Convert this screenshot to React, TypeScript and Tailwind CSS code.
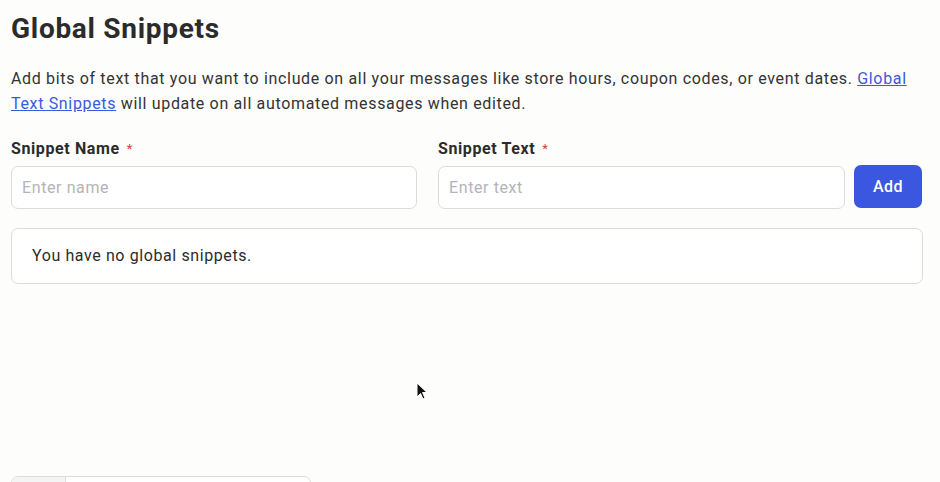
import React from "react";

const FONT = { fontFamily: "Roboto, 'Noto Sans', sans-serif" };

function Field({ label, placeholder, width }: { label: string; placeholder: string; width: string }) {
  return (
    <div className={`flex flex-col ${width}`}>
      <label className="mb-[7px] flex items-center text-[16px] font-bold leading-[20px] tracking-[0.6px] text-[#2b2b2b]">
        {label}
        <span className="ml-[7px] text-[13px] font-normal text-[#d0414a]">*</span>
      </label>
      <input
        placeholder={placeholder}
        className="h-[43px] rounded-[7px] border border-[#dcdcdc] bg-white px-[10px] text-[16px] tracking-[0.6px] text-[#2b2b2b] outline-none placeholder:text-[#b4b4b8]"
      />
    </div>
  );
}

export default function App() {
  return (
    <div
      className="relative h-[482px] w-[940px] overflow-hidden bg-[#fdfdfc] px-[11px] pt-[11px] text-[#2b2b2b]"
      style={FONT}
    >
      <h1 className="text-[28px] font-bold leading-[36px] tracking-[0.7px] text-[#2b2b2b]">Global Snippets</h1>
      <p className="mt-[19px] w-[905px] text-[16px] leading-[25px] tracking-[0.66px] text-[#333]">
        Add bits of text that you want to include on all your messages like store hours, coupon codes, or event dates.{" "}
        <a href="#" className="text-[#3a5bd9] underline">
          Global Text Snippets
        </a>{" "}
        will update on all automated messages when edited.
      </p>

      <div className="mt-[23px] flex items-end">
        <Field label="Snippet Name" placeholder="Enter name" width="w-[406px]" />
        <div className="ml-[21px] flex items-end gap-[9px]">
          <Field label="Snippet Text" placeholder="Enter text" width="w-[407px]" />
          <button className="mb-[1px] h-[43px] w-[68px] rounded-[7px] bg-[#3b57e0] text-[16px] font-medium tracking-[0.5px] text-white">
            Add
          </button>
        </div>
      </div>

      <div className="mt-[19px] flex h-[56px] w-[912px] items-center rounded-[7px] border border-[#dcdcdc] bg-white px-[20px] text-[16px] tracking-[0.6px] text-[#2b2b2b]">
        You have no global snippets.
      </div>

      <div className="absolute left-[11px] top-[476px] flex h-[30px] w-[300px] overflow-hidden rounded-[7px] border border-[#dcdcdc] bg-white">
        <div className="w-[54px] border-r border-[#dcdcdc] bg-[#f4f4f4]" />
        <div className="flex-1" />
      </div>

      <svg
        className="absolute left-[416px] top-[382px]"
        width="12"
        height="19"
        viewBox="0 0 12 19"
      >
        <path d="M1 1 L1 15 L4.5 11.5 L7 17 L9 16 L6.5 10.5 L11 10.5 Z" fill="#111" stroke="#fff" strokeWidth="1" />
      </svg>
    </div>
  );
}
